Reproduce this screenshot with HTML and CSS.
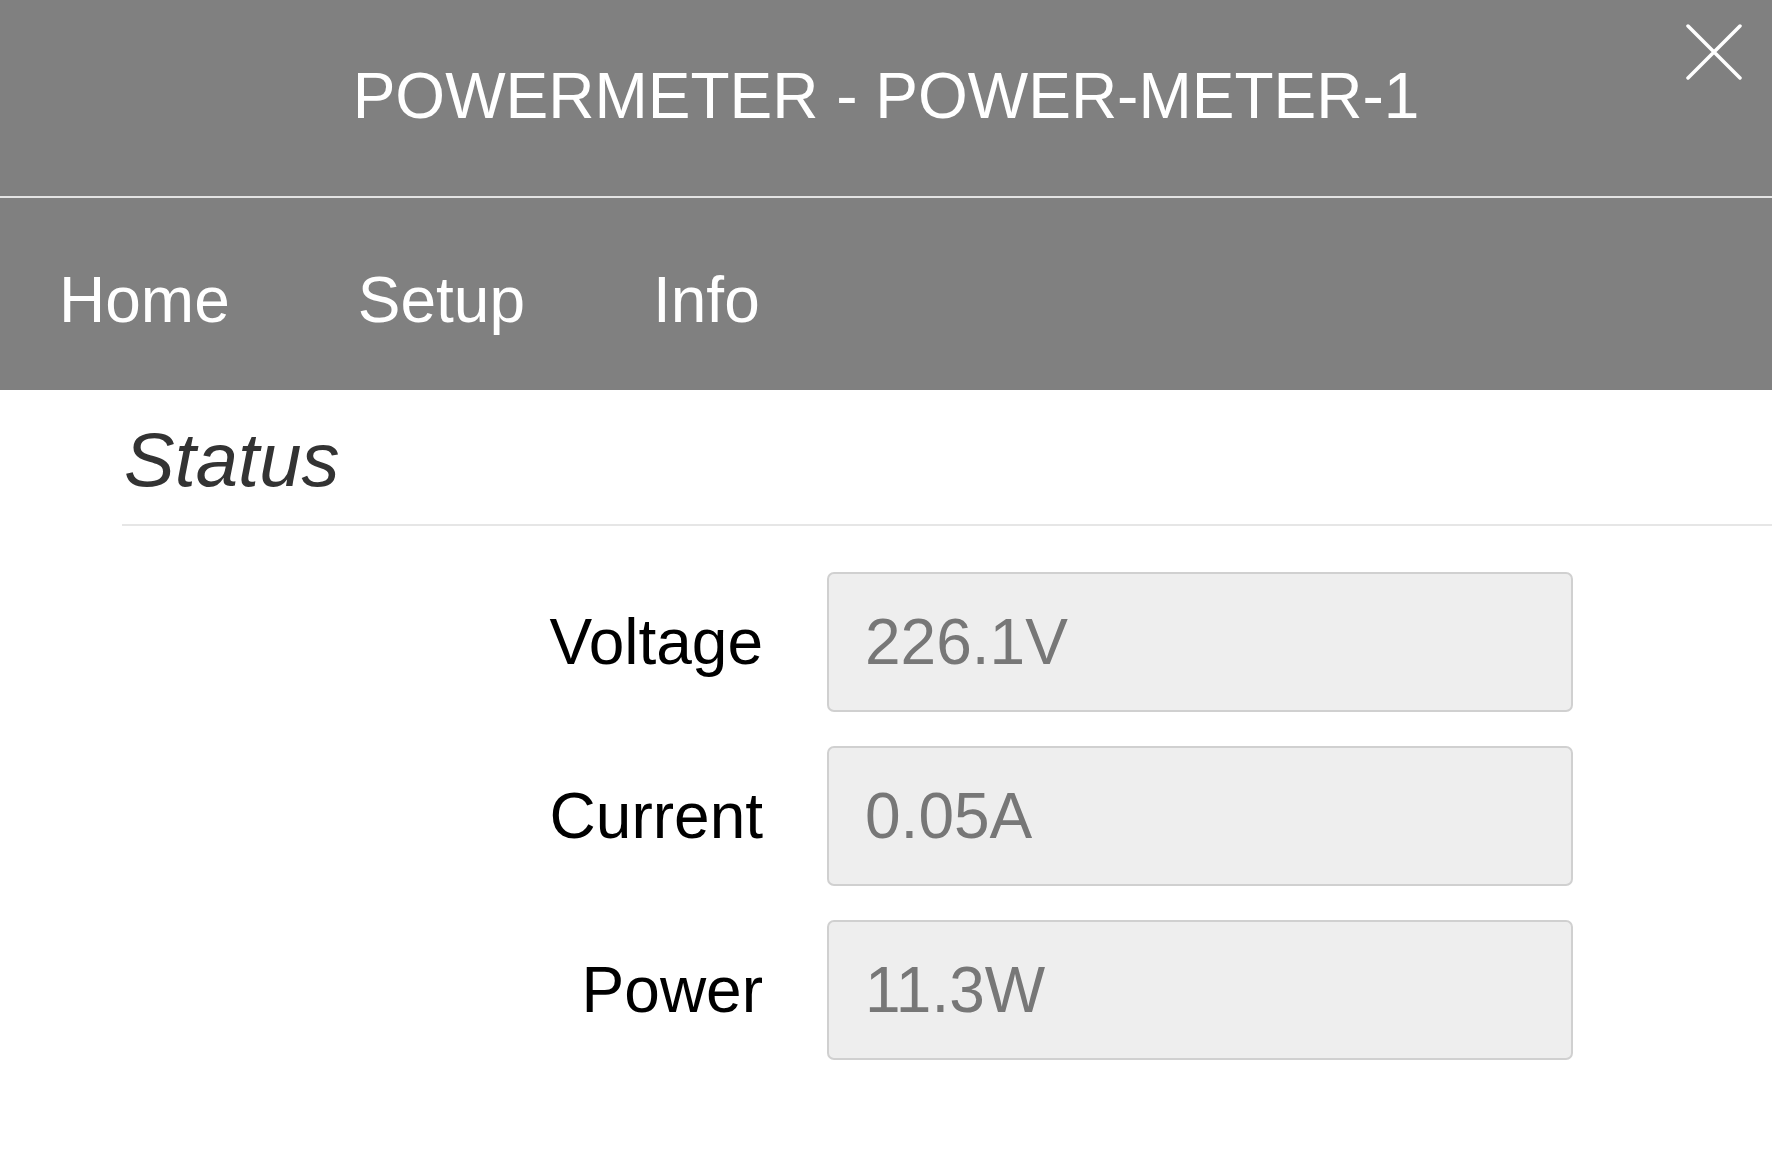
FILE: index.html
```html
<!DOCTYPE html>
<html lang="en">
<head>
<meta charset="utf-8">
<title>POWERMETER - POWER-METER-1</title>
<link rel="stylesheet" href="styles.css">
</head>
<body>
<header class="topbar">
  <h1 class="title">POWERMETER - POWER-METER-1</h1>
  <button class="close" type="button" aria-label="Close">
    <svg viewBox="0 0 56 56" width="56" height="56"><path d="M2 2 L54 54 M54 2 L2 54" stroke="#fff" stroke-width="3.5" stroke-linecap="round" fill="none"/></svg>
  </button>
</header>
<nav class="menu">
  <a class="menu-link" href="#">Home</a>
  <a class="menu-link" href="#">Setup</a>
  <a class="menu-link" href="#">Info</a>
</nav>
<main class="content">
  <h2 class="section-title">Status</h2>
  <hr class="divider">
  <form class="status-form">
    <div class="row">
      <label class="row-label">Voltage</label>
      <div class="row-value">226.1V</div>
    </div>
    <div class="row">
      <label class="row-label">Current</label>
      <div class="row-value">0.05A</div>
    </div>
    <div class="row">
      <label class="row-label">Power</label>
      <div class="row-value">11.3W</div>
    </div>
  </form>
</main>
</body>
</html>
```
FILE: styles.css
```css
html, body {
  margin: 0;
  padding: 0;
  background: #ffffff;
  font-family: "Liberation Sans", Arial, Helvetica, sans-serif;
}

.topbar {
  position: relative;
  background: #808080;
  height: 198px;
  box-sizing: border-box;
  padding-top: 64px;
  border-bottom: 2px solid #e4e4e4;
}

.title {
  margin: 0;
  color: #ffffff;
  font-weight: normal;
  font-size: 64px;
  line-height: 64px;
  text-align: center;
}

.close {
  position: absolute;
  top: 24px;
  right: 30px;
  width: 56px;
  height: 56px;
  padding: 0;
  border: 0;
  background: transparent;
}

.close svg {
  display: block;
}

.menu {
  background: #808080;
  display: flex;
  gap: 128px;
  padding: 70px 0 58px 59px;
}

.menu-link {
  color: #ffffff;
  text-decoration: none;
  font-size: 64px;
  line-height: 64px;
}

.content {
  padding: 32px 0 0 122px;
}

.section-title {
  margin: 0;
  padding-left: 2px;
  font-style: italic;
  font-weight: normal;
  font-size: 76px;
  line-height: 76px;
  color: #333333;
}

.divider {
  margin: 26px 0 0 0;
  border: 0;
  border-top: 2px solid #e6e6e6;
  height: 0;
}

.status-form {
  display: flex;
  flex-direction: column;
  gap: 34px;
  padding-top: 46px;
}

.row {
  display: grid;
  grid-template-columns: 641px 746px;
  column-gap: 64px;
  align-items: center;
}

.row-label {
  text-align: right;
  font-size: 64px;
  line-height: 64px;
  color: #000000;
}

.row-value {
  box-sizing: border-box;
  height: 140px;
  display: flex;
  align-items: center;
  padding-left: 36px;
  background: #eeeeee;
  border: 2px solid #d0d0d0;
  border-radius: 7px;
  font-size: 64px;
  line-height: 64px;
  color: #777777;
}
```
